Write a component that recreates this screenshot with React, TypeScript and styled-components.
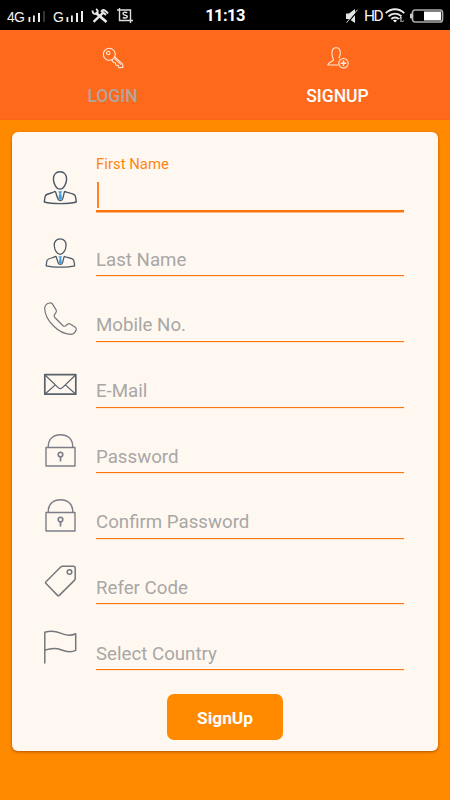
import React from "react";
import styled, { createGlobalStyle } from "styled-components";

const GlobalStyle = createGlobalStyle`
  *, *::before, *::after { box-sizing: border-box; }
  body { margin: 0; font-family: Roboto, sans-serif; background: #ff8a00; }
  svg { display: block; flex: none; overflow: visible; }
`;

const Screen = styled.main`
  width: 450px;
  height: 800px;
  display: flex;
  flex-direction: column;
  background: #ff8a00;
  overflow: hidden;
`;

const StatusBar = styled.div`
  height: 30px;
  flex: none;
  display: grid;
  grid-template-columns: 1fr auto 1fr;
  align-items: center;
  padding: 1px 7px 0 7px;
  background: #000;
  color: #f2f2f2;
`;

const StatusGroup = styled.div<{ $end?: boolean }>`
  display: flex;
  align-items: center;
  justify-content: ${(p) => (p.$end ? "flex-end" : "flex-start")};
`;

const Network = styled.span<{ $width: number }>`
  width: ${(p) => p.$width}px;
  flex: none;
  font-family: "Liberation Sans", sans-serif;
  font-size: 14px;
  line-height: 18px;
  letter-spacing: -0.9px;
  white-space: nowrap;
  padding-top: 3px;
`;

const Quality = styled.span`
  width: 21px;
  flex: none;
  font-size: 15.5px;
  line-height: 18px;
  letter-spacing: -1.5px;
  padding-top: 1px;
`;

const Clock = styled.time`
  font-size: 16.5px;
  line-height: 20px;
  font-weight: 700;
  color: #fff;
  letter-spacing: -0.6px;
  padding-top: 1px;
`;

const StatusIcon = styled.svg<{ $gap?: number }>`
  margin-right: ${(p) => p.$gap ?? 0}px;
`;

const Tabs = styled.nav`
  height: 90px;
  flex: none;
  display: grid;
  grid-template-columns: 1fr 1fr;
  background: #ff691b;
  border-bottom: 1px solid #fa6613;
`;

const Tab = styled.div<{ $active?: boolean }>`
  display: flex;
  flex-direction: column;
  align-items: center;
  padding-top: 17px;
  gap: 17px;
  font-size: 17.5px;
  line-height: 20px;
  font-weight: 500;
  color: ${(p) => (p.$active ? "#fff" : "#b3a49e")};
`;

const TabIcon = styled.svg`
  fill: none;
  stroke: #ffe9dc;
  stroke-width: 1.1;
`;

const Card = styled.form`
  width: 426px;
  height: 619px;
  margin: 12px 12px 0;
  padding: 13px 34px 0 31.5px;
  display: flex;
  flex-direction: column;
  background: #fff8f1;
  border-radius: 6px;
  box-shadow: 0 1px 3px rgba(120, 50, 0, 0.6);
`;

const Field = styled.div`
  height: 65.65px;
  flex: none;
  display: flex;
  justify-content: space-between;
`;

const FieldIcon = styled.svg`
  margin-top: 26px;
  fill: none;
  stroke: #74777b;
  stroke-width: 1.2;
  stroke-linejoin: round;
`;

const FieldBody = styled.div<{ $focused?: boolean }>`
  width: 308px;
  height: ${(p) => (p.$focused ? 67 : 65.65)}px;
  display: flex;
  flex-direction: column;
  justify-content: ${(p) => (p.$focused ? "space-between" : "flex-end")};
  padding: ${(p) => (p.$focused ? "8.500px 0 2.500px" : "0 0 3.500px")};
  border-bottom: ${(p) => (p.$focused ? "2px" : "1px")} solid #ff7408;
  box-shadow: ${(p) => (p.$focused ? "0 1px 0 rgba(255, 116, 8, 0.45)" : "0 1px 0 rgba(255, 116, 8, 0.12)")};
`;

const FloatingLabel = styled.span`
  font-size: 14.8px;
  line-height: 20px;
  color: #ff8510;
  letter-spacing: 0.05px;
`;

const Placeholder = styled.span`
  font-size: 18.7px;
  line-height: 24px;
  color: #a8a7a5;
`;

const Caret = styled.i`
  width: 2px;
  height: 26px;
  margin-left: 0.5px;
  background: #ff8126;
`;

const SubmitButton = styled.button`
  width: 116px;
  height: 46px;
  margin: 24px 0 0 123.5px;
  padding: 2px 0 0;
  border: 0;
  border-radius: 7px;
  background: #ff8a00;
  color: #fff;
  font: 700 17.3px/22px Roboto, sans-serif;
`;

const PersonShape = () => (
  <g stroke="#4c5966" strokeWidth="1.4">
    <path d="M16 .8c-4.3 0-6.8 3.1-6.6 7.3.2 4.7 2.8 10 6.6 10s6.4-5.3 6.6-10C22.800 3.900 20.300.8 16 .8Z" />
    <path d="M11.300 20.200C10 22 3.200 22 1.500 24.500.7 26 .5 30 .3 31c8 2.100 24 2.100 32 0-.2-1-.4-5-1.200-6.500-1.700-2.500-8.500-2.500-10.400-4.300M11.300 20.200c1.400 3.300 2 7.500 3.200 8.600 1 .8 2.600.8 3.600 0 1.200-1.100 1.200-5.300 2.600-8.600" />
    <path d="M14.400 20.300h3.600l-1 2.300 1 5-1.800 1.300-1.700-1.300.9-5Z" fill="#3d9cdd" stroke="#76b8df" strokeWidth=".5" />
  </g>
);

const LockShape = () => (
  <g stroke="#7c7d89" strokeWidth="1.4">
    <rect x="2" y="13.500" width="29" height="18.500" />
    <path d="M4.300 13.500V12C4.300 5 9.500.7 16.500.7S28.700 5 28.700 12v1.500" />
    <circle cx="16.500" cy="20.500" r="2.300" strokeWidth="1.600" />
    <path d="M16.500 23v4.500" strokeWidth="1.700" />
  </g>
);

const shapes = {
  person: <PersonShape />,
  personSmall: (
    <g transform="translate(1.900 1.200) scale(.89)">
      <PersonShape />
    </g>
  ),
  phone: (
    <path d="M5.200 1C2.800 1.600.7 3.600.7 6.500 1.200 18.500 14.500 31.800 26.500 32.300c2.900 0 4.900-2.100 5.700-4.600.4-1.200-.1-1.900-1-2.500l-5-3.200c-1-.6-1.900-.4-2.700.3l-2.100 1.700c-.9.500-1.800.2-2.600-.5l-8-8c-.7-.8-1-1.700-.5-2.600L12 10.400c.7-.9.6-1.600.1-2.500L8.400 1.900C7.600.8 6.500.6 5.200 1Z" />
  ),
  mail: (
    <g stroke="#59616b">
      <rect x=".8" y="6.700" width="31" height="19.500" strokeWidth="1.700" />
      <path d="m1.300 7.200 12.600 12.200c1.600 1.600 3.200 1.600 4.800 0L31.300 7.200M1.300 25.700l10-8.800m20 8.800-10-8.800" />
    </g>
  ),
  lock: <LockShape />,
  tag: (
    <g strokeWidth="1.500">
      <path d="M18.500 1.300h11c1.200 0 1.700.6 1.700 1.800v10.400c0 .8-.2 1.300-.8 1.900L15.300 30.400c-.6.600-1.200.6-1.800 0L2 18.600c-.6-.6-.6-1.200 0-1.800L16.700 2c.5-.5 1-.7 1.800-.7Z" />
      <circle cx="25.500" cy="7" r="2.300" />
    </g>
  ),
  flag: (
    <path
      strokeWidth="1.500"
      d="M.8 33.500V2.200C6.500.4 11.500.9 16.500 3.100s11 2.600 15.200.6v16.600C27 22.700 22 21.700 17 19.700S6.500 18.300.8 20.100"
    />
  ),
};

const fields: { icon: keyof typeof shapes; label: string }[] = [
  { icon: "person", label: "First Name" },
  { icon: "personSmall", label: "Last Name" },
  { icon: "phone", label: "Mobile No." },
  { icon: "mail", label: "E-Mail" },
  { icon: "lock", label: "Password" },
  { icon: "lock", label: "Confirm Password" },
  { icon: "tag", label: "Refer Code" },
  { icon: "flag", label: "Select Country" },
];

const Signal = ({ weak, gap }: { weak?: boolean; gap: number }) => (
  <StatusIcon $gap={gap} width="18" height="10" fill="#ededed">
    <rect x="0.500" y="6" width="1.800" height="5" />
    <rect x="5" y="4.500" width="1.800" height="6.500" />
    <rect x="10" y="2" width="2" height="9" />
    <rect x="15" y="0" width="2" height="11" fill={weak ? "#343434" : "#ededed"} />
  </StatusIcon>
);

export default function App() {
  return (
    <Screen>
      <GlobalStyle />
      <StatusBar>
        <StatusGroup>
          <Network $width={21}>4G</Network>
          <Signal weak gap={7} />
          <Network $width={13}>G</Network>
          <Signal gap={7} />
          <StatusIcon $gap={8} width="18" height="16" fill="none" stroke="#e8e8e8">
            <path d="m4.500 4.500 11 9.500" strokeWidth="2.800" />
            <path d="M1.500 2.500c0 3 2 4 4 3S7 2 5 1" strokeWidth="1.900" />
            <path d="m2.500 13.800 9.500-9" strokeWidth="2.400" />
            <path d="m10 2.500 5 4.500M11 2.500c2-1.500 4 .5 6 3" strokeWidth="2" />
          </StatusIcon>
          <StatusIcon width="17" height="15" fill="none" stroke="#dedede" strokeWidth="1.400">
            <path d="M0 2h13.500V15M2.500 0v12.500H16" />
            <path d="M10.300 4.700C8.500 4 6 4 6 5.700c0 2 4.300 1 4.300 2.900 0 1.700-2.700 1.700-4.500.9" strokeWidth="1.500" />
          </StatusIcon>
        </StatusGroup>
        <Clock>11:13</Clock>
        <StatusGroup $end>
          <StatusIcon $gap={6} width="12" height="14" fill="#e6e6e6">
            <path d="M0 4.500h3L9 0v14L3 10H0Z" />
            <path d="M1 14.500 12 1.500" stroke="#000" strokeWidth="1.200" />
            <path d="M.500 13.700 11.500 .700" stroke="#ddd" strokeWidth="1" />
          </StatusIcon>
          <Quality>HD</Quality>
          <StatusIcon $gap={5} width="20" height="15" fill="none" stroke="#ececec" strokeWidth="1.800">
            <path d="M.700 5.200c5.200-5.300 13.400-5.300 18.600 0M3.500 8.300c3.600-3.700 9.400-3.700 13 0M6.300 11c2-2 5.400-2 7.400 0" />
            <path d="m8 12.400 2 2.200 2-2.200q-2-1.500-4 0Z" fill="#fff" stroke="none" />
            <path d="m14.300 11 1.700-2v5m2.700-1.500L17.400 14" strokeWidth="1" />
          </StatusIcon>
          <StatusIcon width="33" height="14">
            <rect x="2.500" y="1" width="30" height="12" rx="2.500" fill="#000" stroke="#aaa" strokeWidth="1.700" />
            <rect x="0" y="4.500" width="2.800" height="5" rx="1" fill="#ccc" />
            <rect x="14" y="2.500" width="17" height="9" fill="#fff" />
          </StatusIcon>
        </StatusGroup>
      </StatusBar>
      <Tabs>
        <Tab>
          <TabIcon width="22" height="22" viewBox="0 0 22 22">
            <circle cx="7.300" cy="7.300" r="6" />
            <circle cx="6.200" cy="6" r="1.700" />
            <path d="m12.700 9.800 8 7.400.2 3.200-4 .2-.8-2.200-2.300-.4-.4-2.300-2-.2-1.600-2.600m2.700-1.500 6.600 6.300" />
          </TabIcon>
          LOGIN
        </Tab>
        <Tab $active>
          <TabIcon width="22" height="22" viewBox="0 0 22 22">
            <path d="M11.500 18H.9c.1-3.500 5.600-3.100 5.600-5.200 0-1.300-1.600-2-1.600-7C4.900 2.500 6.300.8 9.100.8s4.200 1.700 4.200 5c0 3-.9 4.100-1.400 5.500" />
            <circle cx="16.500" cy="16.200" r="4.700" />
            <path d="M16.500 13.400V19m-2.800-2.800h5.600" strokeWidth="1.500" />
          </TabIcon>
          SIGNUP
        </Tab>
      </Tabs>
      <Card>
        {fields.map(({ icon, label }, index) => (
          <Field key={label}>
            <FieldIcon width="33" height="33" viewBox="0 0 33 33">{shapes[icon]}</FieldIcon>
            <FieldBody $focused={index === 0}>
              {index === 0 ? (
                <>
                  <FloatingLabel>{label}</FloatingLabel>
                  <Caret />
                </>
              ) : (
                <Placeholder>{label}</Placeholder>
              )}
            </FieldBody>
          </Field>
        ))}
        <SubmitButton type="button">SignUp</SubmitButton>
      </Card>
    </Screen>
  );
}
